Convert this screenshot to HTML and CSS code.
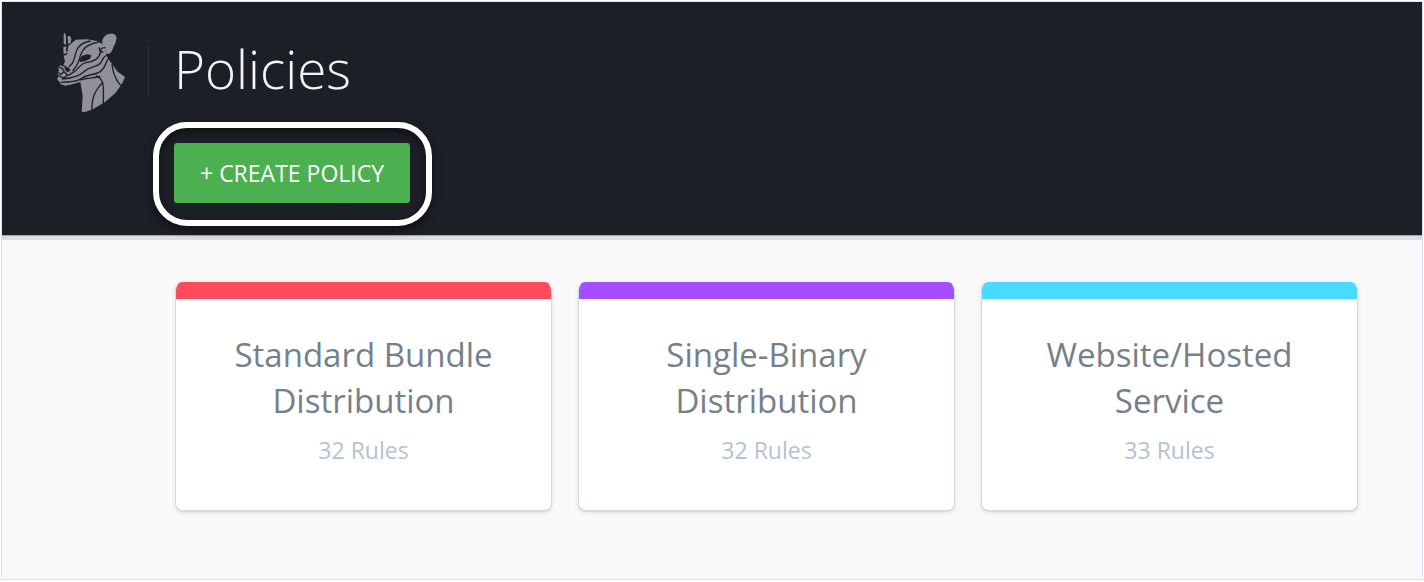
FILE: index.html
```html
<!DOCTYPE html>
<html lang="en">
<head>
<meta charset="utf-8">
<title>Policies</title>
<link rel="stylesheet" href="styles.css">
</head>
<body>
<div class="app">
  <header class="header">
    <div class="brand">
      <svg class="logo" viewBox="33 30 210 243" aria-hidden="true">
        <g fill="#909196">
          <path d="M56 36L60 32L63 44L63 70L56 64Z"/>
          <path d="M68 43L75 42L79 50L77 62L69 66Z"/>
          <path d="M55 76L64 72L63 84L66 93L56 96Z"/>
          <path d="M70 72L92 53L125 52L157 57L170 65L181 78L184 99L190 111L201 126L218 149L240 165L232 184L212 212L181 239L145 261L120 270L110 269L113 222L106 180L82 187L61 191L47 187L44 180L37 173L40 160L37 152L43 144L38 137L45 130L53 132L60 119L56 101L66 98Z"/>
          <path d="M173 70C168 53 177 39 192 36C207 32 217 39 214 53C212 64 207 69 203 81C198 94 191 100 183 94L182 83Z"/>
        </g>
        <g fill="none" stroke="#1d1f27" stroke-width="4" stroke-linejoin="round">
          <path d="M137 57C117 60 105 68 98 79C89 94 91 110 82 124L72 134"/>
          <path d="M162 60C140 64 120 74 113 86C104 99 103 122 93 133L83 147"/>
          <path d="M162 76L166 91C163 112 143 119 122 122C105 126 102 139 88 149L70 160"/>
          <path d="M182 77C164 77 163 88 175 91"/>
          <path d="M186 99C170 106 173 121 161 128C145 137 131 136 117 149C101 164 79 169 50 171"/>
          <path d="M190 110C180 125 181 139 166 149C149 160 124 157 109 170C96 179 73 181 47 181"/>
          <path d="M105 174C125 167 150 168 166 163M152 161C181 172 175 199 175 244"/>
          <path d="M173 181C151 205 139 226 141 266"/>
          <path d="M201 126C203 149 210 170 225 188L237 192"/>
          <path d="M36 133L52 139L57 149L48 157L35 150"/>
          <path d="M52 129L64 136M57 149L68 160L56 168L38 160"/>
        </g>
        <path d="M102 115L111 101L127 97L139 100L135 110L121 117L105 120Z" fill="#1d1f27"/>
        <path d="M59 136L70 136L77 145L68 151L60 144Z" fill="#1d1f27"/>
      </svg>
    </div>
    <div class="heading">
      <h1 class="title">Policies</h1>
      <button class="create" type="button">+ CREATE POLICY</button>
    </div>
  </header>
  <main class="policies">
    <article class="card card-red">
      <h2 class="card-title">Standard Bundle Distribution</h2>
      <p class="card-rules">32 Rules</p>
    </article>
    <article class="card card-purple">
      <h2 class="card-title">Single-Binary Distribution</h2>
      <p class="card-rules">32 Rules</p>
    </article>
    <article class="card card-cyan">
      <h2 class="card-title">Website/Hosted Service</h2>
      <p class="card-rules">33 Rules</p>
    </article>
  </main>
</div>
</body>
</html>
```
FILE: styles.css
```css
* {
  box-sizing: border-box;
}

body {
  margin: 0;
  padding: 2px;
  background: #fff;
  font-family: "Open Sans", "Noto Sans", sans-serif;
}

h1, h2, p {
  margin: 0;
}

.app {
  min-height: calc(100vh - 5px);
  background: #f9f9fb;
  box-shadow: 0 0 0 1px #dfe4ea;
}

.header {
  display: flex;
  align-items: flex-start;
  padding: 30px 64px 32px 54px;
  background: #1d1f27;
  box-shadow: 0 1px 0 #a5a6a9, 0 5px 0 #dededf;
}

.brand {
  display: flex;
  align-items: center;
  width: 118px;
}

.logo {
  width: 70px;
  height: 81px;
}

.heading {
  display: flex;
  flex-direction: column;
  align-items: flex-start;
  gap: 37px;
}

.title {
  position: relative;
  height: 74px;
  color: #f4f4f4;
  font-size: 53px;
  font-weight: 300;
  line-height: 74px;
}

.title::before {
  content: "";
  position: absolute;
  top: 14px;
  left: -26px;
  width: 1px;
  height: 50px;
  background: #30323a;
}

.create {
  position: relative;
  height: 60px;
  padding: 0 26px;
  border: 0;
  border-radius: 3px;
  background: #4caf50;
  color: #fff;
  font-family: inherit;
  font-size: 23px;
  font-weight: 400;
  line-height: 60px;
}

.create::after {
  content: "";
  position: absolute;
  inset: -21px -22px -23px -21px;
  border: 6px solid #fff;
  border-radius: 34px;
  box-shadow: 0 4px 8px rgba(0, 0, 0, 0.5), inset 0 4px 8px rgba(0, 0, 0, 0.5);
}

.policies {
  display: grid;
  grid-template-columns: repeat(3, 1fr);
  gap: 26px;
  padding: 47px 64px 67px 173px;
}

.card {
  min-height: 230px;
  padding: 49px 40px 40px;
  border: 1px solid #d2dce4;
  border-width: 1px 1px 2px;
  border-radius: 8px;
  background-color: #fff;
  background-repeat: no-repeat;
  background-size: 100% 17px;
  background-origin: border-box;
  box-shadow: 0 1px 4px rgba(40, 60, 80, 0.12);
  text-align: center;
}

.card-red {
  border-top-color: #ff4b5c;
  background-image: linear-gradient(#ff4b5c, #ff4b5c);
}

.card-purple {
  border-top-color: #a64dff;
  background-image: linear-gradient(#a64dff, #a64dff);
}

.card-cyan {
  border-top-color: #4ad9ff;
  background-image: linear-gradient(#4ad9ff, #4ad9ff);
}

.card-title {
  color: #76808a;
  font-size: 33px;
  font-weight: 400;
  line-height: 46px;
}

.card-rules {
  margin-top: 10px;
  color: #b3c3d3;
  font-size: 23px;
  line-height: 32px;
}
```
